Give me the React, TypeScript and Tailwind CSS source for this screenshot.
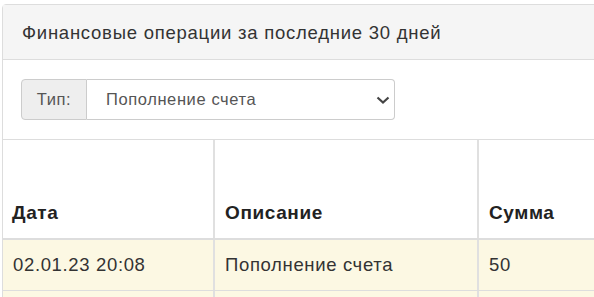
import React from 'react';

const rows = [
  { date: '02.01.23 20:08', desc: 'Пополнение счета', sum: '50' },
  { date: '28.12.22 14:31', desc: 'Пополнение счета', sum: '100' },
];

export default function App() {
  return (
    <div
      className="w-[594px] h-[297px] overflow-hidden bg-white pt-[4px] pl-[2px] text-[#333]"
      style={{ fontFamily: '"Liberation Sans", Arial, sans-serif' }}
    >
      <div className="w-[720px] border border-[#ddd] rounded-tl-[4px] bg-white">
        {/* heading */}
        <div className="h-[55px] bg-[#f5f5f5] border-b border-[#ddd] px-[19px] flex items-center pt-[1px] text-[18.5px] tracking-[0.75px]">
          Финансовые операции за последние 30 дней
        </div>

        {/* filter */}
        <div className="px-[18px] pt-[19px] pb-[19px]">
          <div className="flex h-[41px] w-[374px] text-[16.5px] tracking-[0.6px]">
            <span className="w-[66px] flex items-center justify-center bg-[#eee] border border-[#ccc] rounded-l-[4px] text-[#555]">
              Тип:
            </span>
            <div className="flex-1 flex items-center justify-between border border-l-0 border-[#ccc] rounded-r-[4px] pl-[19px] pr-[4px] text-[#555]">
              <span>Пополнение счета</span>
              <svg width="14" height="8" viewBox="0 0 14 8" className="text-[#444]">
                <path d="M1.5 1.5 L7 6.5 L12.5 1.5" fill="none" stroke="currentColor" strokeWidth="2.2" />
              </svg>
            </div>
          </div>
        </div>

        {/* table */}
        <div className="border-t border-[#ddd] text-[18.5px]">
          <div className="grid grid-cols-[212px_264px_1fr] h-[100px] border-b-2 border-[#ddd] font-bold text-[#222] text-[19px] tracking-[0.6px]">
            <div className="border-r-2 border-[#e0e0e0] pl-[9px] flex items-end pb-[11px]">Дата</div>
            <div className="border-r-2 border-[#e0e0e0] pl-[10px] flex items-end pb-[11px]">Описание</div>
            <div className="pl-[10px] flex items-end pb-[11px]">Сумма</div>
          </div>
          {rows.map((r) => (
            <div
              key={r.date}
              className="grid grid-cols-[212px_264px_1fr] h-[51px] border-b border-[#ddd] bg-[#fcf8e3] tracking-[0.65px]"
            >
              <div className="border-r-2 border-[#e0e0e0] pl-[10px] flex items-center">{r.date}</div>
              <div className="border-r-2 border-[#e0e0e0] pl-[10px] flex items-center">{r.desc}</div>
              <div className="pl-[10px] flex items-center">{r.sum}</div>
            </div>
          ))}
        </div>
      </div>
    </div>
  );
}
